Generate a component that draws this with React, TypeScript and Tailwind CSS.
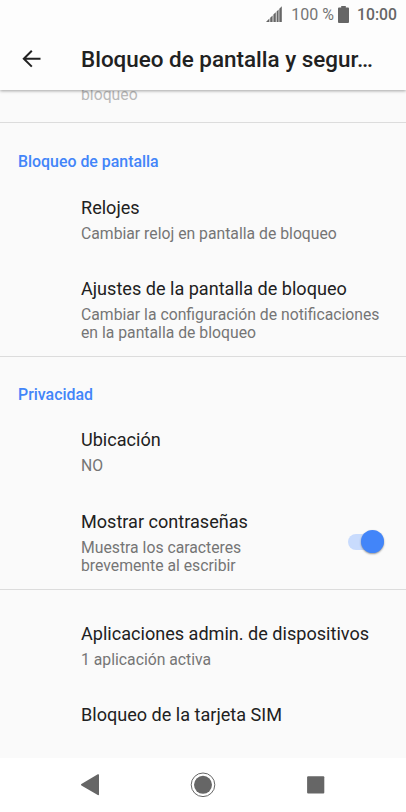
import React from "react";

function Item({ title, sub, className = "" }: { title: string; sub?: string[]; className?: string }) {
  return (
    <div className={`pl-[81px] ${className}`}>
      <div className="text-[18.08px] leading-6 whitespace-nowrap text-[#212121]">{title}</div>
      {sub && (
        <div className="mt-[5px] text-[15.75px] leading-[18.5px] whitespace-nowrap text-[#757575]">
          {sub.map((s) => (
            <div key={s}>{s}</div>
          ))}
        </div>
      )}
    </div>
  );
}

export default function App() {
  return (
    <div className="flex h-[812px] w-[406px] flex-col overflow-hidden bg-[#fafafa] font-['Roboto',sans-serif]">
      <header className="relative z-10 h-[90px] shrink-0 bg-[#fdfdfd] shadow-[0_1px_3px_rgba(0,0,0,0.35)]">
        <div className="flex h-[28px] items-center justify-end pr-[9px] text-[16px] text-[#757575]">
          <svg className="mr-[9px] h-[16px] w-[16px]" viewBox="0 0 16 16" fill="#666">
            <path d="M0 16L3.4 12.6V16ZM4.2 11.8L6.6 9.4V16H4.2ZM7.4 8.6L9.8 6.2V16H7.4ZM10.6 5.4L12.6 3.4V16H10.6ZM13.3 2.7L15.8 .2V16H13.3Z" />
          </svg>
          <span className="pt-px">100 %</span>
          <svg className="mr-[8px] ml-[4px] h-[17px] w-[11px]" viewBox="0 0 11 17">
            <path d="M3.2 0H7.8V1.5H10Q11 1.5 11 2.5V16Q11 17 10 17H1Q0 17 0 16V2.5Q0 1.5 1 1.5H3.2Z" fill="#666" />
          </svg>
          <span className="pt-px text-[15.75px] font-medium text-[#666]">10:00</span>
        </div>
        <div className="flex h-[62px] items-center pl-[22px]">
          <svg className="h-[18px] w-[19px]" viewBox="0 0 19 18" fill="none" stroke="#212121" strokeWidth="2">
            <path d="M18.5 8.7H2M9.8 .8L1.8 8.7L9.8 16.6" />
          </svg>
          <h1 className="ml-[40px] pt-[2px] text-[22.45px] font-medium whitespace-nowrap text-[#212121]">Bloqueo de pantalla y segur…</h1>
        </div>
      </header>
      <main className="h-[668px] shrink-0 overflow-hidden">
        <div className="flow-root h-[33px] border-b border-[#dcdcdc] pl-[81px]">
          <div className="-mt-[4px] text-[15.75px] leading-[18px] text-[#b8b8b8]">bloqueo</div>
        </div>
        <section className="h-[234px] border-b border-[#dcdcdc] pt-[29px]">
          <h2 className="pl-[18px] text-[15.9px] leading-5 font-medium text-[#4285f9]">Bloqueo de pantalla</h2>
          <Item className="mt-[24px]" title="Relojes" sub={["Cambiar reloj en pantalla de bloqueo"]} />
          <Item className="mt-[33px]" title="Ajustes de la pantalla de bloqueo" sub={["Cambiar la configuración de notificaciones", "en la pantalla de bloqueo"]} />
        </section>
        <section className="h-[233px] border-b border-[#dcdcdc] pt-[28px]">
          <h2 className="pl-[18px] text-[15.9px] leading-5 font-medium text-[#4285f9]">Privacidad</h2>
          <Item className="mt-[23px]" title="Ubicación" sub={["NO"]} />
          <div className="mt-[34px] flex justify-between pr-[22px]">
            <Item title="Mostrar contraseñas" sub={["Muestra los caracteres", "brevemente al escribir"]} />
            <div className="mt-[24px] flex h-[16px] w-[36px] items-center justify-end rounded-full bg-[#c8dbfd]">
              <div className="size-[23px] shrink-0 rounded-full bg-[#4285f9] shadow-[0_1px_2px_rgba(0,0,0,0.4)]" />
            </div>
          </div>
        </section>
        <Item className="mt-[32px]" title="Aplicaciones admin. de dispositivos" sub={["1 aplicación activa"]} />
        <Item className="mt-[33px]" title="Bloqueo de la tarjeta SIM" />
      </main>
      <nav className="flex h-[54px] shrink-0 items-center bg-white">
        <svg className="h-[54px] w-[406px]" viewBox="0 758 406 54" fill="#666">
          <path d="M81.8 784.7L98.2 775V794.4Z" stroke="#666" strokeWidth="1.6" strokeLinejoin="round" />
          <circle cx="203" cy="784.8" r="9" />
          <circle cx="203" cy="784.8" r="11.8" fill="none" stroke="#666" strokeWidth="1" />
          <rect x="307.1" y="776.2" width="17.2" height="17.2" rx="1" />
        </svg>
      </nav>
    </div>
  );
}
